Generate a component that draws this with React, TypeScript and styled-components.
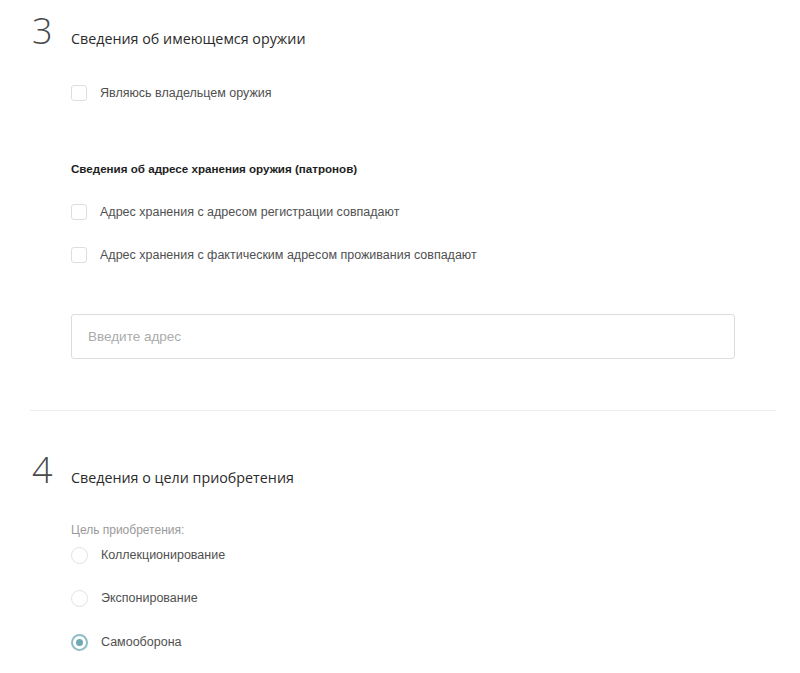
import React from 'react';
import styled, { createGlobalStyle } from 'styled-components';

const GlobalStyle = createGlobalStyle`
  html, body {
    margin: 0;
    padding: 0;
    background: #ffffff;
  }
  body {
    font-family: "Liberation Sans", Arial, sans-serif;
  }
`;

export const Page = styled.div`
  width: 800px;
  padding: 0 24px 0 30px;
  box-sizing: border-box;
`;

export const Section = styled.section<{ $top: number }>`
  padding-top: ${p => p.$top}px;
`;

export const Header = styled.div`
  display: flex;
  align-items: baseline;
`;

export const Numeral = styled.span`
  width: 41px;
  padding-left: 2px;
  box-sizing: border-box;
  font-family: "Open Sans", Lato, sans-serif;
  font-weight: 300;
  font-size: 36px;
  line-height: 36px;
  color: #4a4a4a;
`;

export const Title = styled.h3`
  margin: 0;
  font-family: "Open Sans", sans-serif;
  font-weight: 400;
  font-size: 14.3px;
  line-height: 20px;
  color: #2b2b2b;
`;

export const Body = styled.div`
  margin-left: 41px;
  width: 664px;
  display: flex;
  flex-direction: column;
`;

export const Subheading = styled.h4<{ $gap: number }>`
  margin: ${p => p.$gap}px 0 0;
  font-family: "Liberation Sans", Arial, sans-serif;
  font-weight: 700;
  font-size: 11.6px;
  line-height: 16px;
  color: #1e1e1e;
`;

export const FieldCaption = styled.div<{ $gap: number }>`
  margin-top: ${p => p.$gap}px;
  font-family: "Liberation Sans", Arial, sans-serif;
  font-size: 12px;
  line-height: 16px;
  color: #9a9a9a;
`;

export const OptionRow = styled.label<{ $gap: number }>`
  display: flex;
  align-items: center;
  gap: 13px;
  height: 20px;
  margin-top: ${p => p.$gap}px;
  font-size: 12.5px;
  color: #505050;
  cursor: pointer;
`;

export const CheckBox = styled.span`
  width: 16px;
  height: 16px;
  box-sizing: border-box;
  border: 1px solid #dedede;
  border-radius: 3px;
  background: #ffffff;
  flex: none;
`;

export const RadioMark = styled.span<{ $checked?: boolean }>`
  width: 17px;
  height: 17px;
  box-sizing: border-box;
  border-radius: 50%;
  border: ${p => (p.$checked ? '2px solid #8fbdc6' : '1px solid #e2e2e2')};
  display: flex;
  align-items: center;
  justify-content: center;
  flex: none;

  &::after {
    content: '';
    display: ${p => (p.$checked ? 'block' : 'none')};
    width: 7px;
    height: 7px;
    border-radius: 50%;
    background: #6fa8b4;
  }
`;

export const AddressInput = styled.input`
  margin-top: 49px;
  height: 45px;
  width: 100%;
  box-sizing: border-box;
  padding: 0 16px;
  border: 1px solid #dcdcdc;
  border-radius: 3px;
  font-family: "Liberation Sans", Arial, sans-serif;
  font-size: 13.5px;
  color: #333333;
  outline: none;

  &::placeholder {
    color: #ababab;
  }
`;

export const Divider = styled.hr`
  margin: 51px 0 0;
  border: 0;
  border-top: 1px solid #ececec;
`;

const Check: React.FC<{ label: string; gap: number }> = ({ label, gap }) => (
  <OptionRow $gap={gap}>
    <CheckBox />
    {label}
  </OptionRow>
);

const Radio: React.FC<{ label: string; gap: number; checked?: boolean }> = ({ label, gap, checked }) => (
  <OptionRow $gap={gap}>
    <RadioMark $checked={checked} />
    {label}
  </OptionRow>
);

const purposes = ['Коллекционирование', 'Экспонирование', 'Самооборона'];

export default function App() {
  return (
    <>
      <GlobalStyle />
      <Page>
        <Section $top={13}>
          <Header>
            <Numeral>3</Numeral>
            <Title>Сведения об имеющемся оружии</Title>
          </Header>
          <Body>
            <Check gap={34} label="Являюсь владельцем оружия" />
            <Subheading $gap={58}>Сведения об адресе хранения оружия (патронов)</Subheading>
            <Check gap={25} label="Адрес хранения с адресом регистрации совпадают" />
            <Check gap={23} label="Адрес хранения с фактическим адресом проживания совпадают" />
            <AddressInput placeholder="Введите адрес" />
          </Body>
          <Divider />
        </Section>
        <Section $top={41}>
          <Header>
            <Numeral>4</Numeral>
            <Title>Сведения о цели приобретения</Title>
          </Header>
          <Body>
            <FieldCaption $gap={34}>Цель приобретения:</FieldCaption>
            {purposes.map((p, i) => (
              <Radio key={p} label={p} gap={i === 0 ? 7 : i === 1 ? 23 : 24} checked={p === 'Самооборона'} />
            ))}
          </Body>
        </Section>
      </Page>
    </>
  );
}
